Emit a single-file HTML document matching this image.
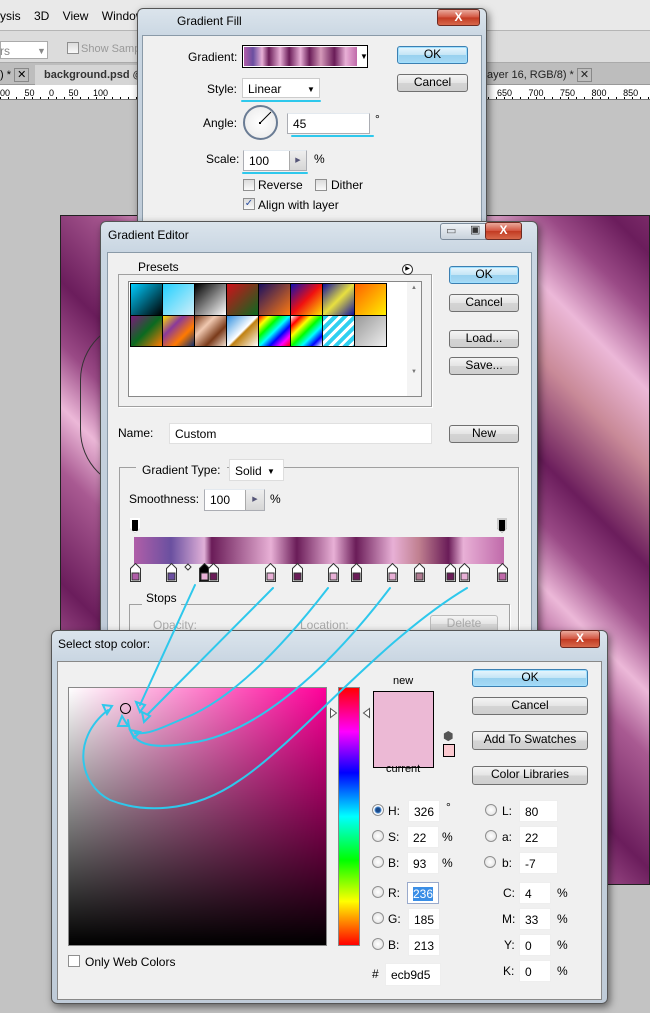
<!DOCTYPE html>
<html><head><meta charset="utf-8"><style>
*{box-sizing:border-box;margin:0;padding:0}
body{width:650px;height:1013px;overflow:hidden;position:relative;background:#c3c3c3;font-family:"Liberation Sans",sans-serif;font-size:12px;color:#000}
.a{position:absolute}
.t{position:absolute;white-space:nowrap;line-height:14px}
.win{position:absolute;background:linear-gradient(180deg,#dbe4ec 0,#c9d6e2 30px,#bfcbd8 100%);border:1px solid #555;border-radius:6px;box-shadow:2px 3px 8px rgba(0,0,0,.5)}
.cl{position:absolute;background:#f0f0f0;border:1px solid #8a9aa8}
.btn{position:absolute;border:1px solid #707070;border-radius:3px;background:linear-gradient(#f4f4f4,#e4e4e4 50%,#d4d4d4 51%,#cfcfcf);text-align:center;font-size:12px;line-height:15px}
.btn.def{border-color:#3c7fb1;background:linear-gradient(#e8f6fd,#c4e5f6 50%,#98d1ef 51%,#a7d9f5);box-shadow:inset 0 0 0 1px #9fe0ff}
.inp{position:absolute;background:#fff;border:1px solid #abadb3;border-top-color:#e3e9ef;font-size:12px;line-height:18px;padding-left:5px}
.x{position:absolute;border:1px solid #6d2a22;border-radius:3px;background:linear-gradient(#e9a99c,#d2533e 50%,#c23a22 51%,#d7684b);color:#fff;font-weight:bold;text-align:center;font-size:12px;line-height:15px}
.cb{position:absolute;width:12px;height:12px;border:1px solid #8f8f8f;background:linear-gradient(#dcdcdc,#fafafa)}
.rad{position:absolute;width:12px;height:12px;border-radius:50%;border:1px solid #8f8f8f;background:radial-gradient(#fff,#ddd)}
.grp{position:absolute;border:1px solid #a0a0a0;box-shadow:1px 1px 0 #fff}
</style></head><body>
<div class="a" style="left:0;top:0;width:650px;height:31px;background:#e9e9e9;border-bottom:1px solid #b5b5b5"></div>
<div class="t" style="left:0;top:9px;font-size:12px">ysis&nbsp;&nbsp;&nbsp;&nbsp;3D&nbsp;&nbsp;&nbsp;&nbsp;View&nbsp;&nbsp;&nbsp;&nbsp;Window</div>
<div class="a" style="left:0;top:31px;width:650px;height:32px;background:#dcdcdc;border-bottom:1px solid #aaa"></div>
<div class="a" style="left:0;top:41px;width:48px;height:18px;background:#fff;border:1px solid #aaa"></div>
<div class="t" style="left:0;top:44px;color:#888">rs</div>
<div class="t" style="left:37px;top:44px;color:#888;font-size:9px">▼</div>
<div class="cb" style="left:67px;top:42px"></div>
<div class="t" style="left:81px;top:42px;color:#999;font-size:11px">Show Sampling Rin</div>
<div class="a" style="left:0;top:63px;width:650px;height:22px;background:#bdbdbd;border-bottom:1px solid #999"></div>
<div class="a" style="left:35px;top:65px;width:102px;height:20px;background:#d5d5d5"></div>
<div class="t" style="left:0;top:68px;font-size:11px">) * <span style="border:1px solid #888;padding:0 2px">✕</span></div>
<div class="t" style="left:44px;top:68px;font-size:11px;font-weight:bold;color:#333">background.psd @ 66.7</div>
<div class="t" style="left:487px;top:68px;font-size:11px;color:#222">ayer 16, RGB/8) * <span style="border:1px solid #888;padding:0 2px">✕</span></div>
<div class="a" style="left:0;top:85px;width:650px;height:15px;background:#fff;border-bottom:1px solid #777;background-image:repeating-linear-gradient(90deg,#000 0 1px,transparent 1px 8px);background-size:100% 3px;background-repeat:no-repeat;background-position:0 12px"></div>
<div class="t" style="left:0;top:86px;font-size:9px;word-spacing:12px">00 50 0 50 100</div>
<div class="t" style="left:497px;top:86px;font-size:9px;word-spacing:14px">650 700 750 800 850</div>
<div class="a" style="left:60px;top:215px;width:590px;height:670px;border:1px solid #222;background:linear-gradient(45deg,#6b1d5c 0%,#a95a92 9%,#ecb8d8 14%,#9a4a86 19%,#6b1d5c 24%,#a95a92 33%,#ecb8d8 38%,#9a4a86 43%,#6b1d5c 48%,#a95a92 57%,#ecb8d8 62%,#9a4a86 67%,#6b1d5c 72%,#c98a98 80%,#ecb8d8 86%,#9a4a86 92%,#6b1d5c 97%,#7a2a68 100%)"></div>
<div class="a" style="left:80px;top:320px;width:60px;height:170px;border:1px solid #333;border-right:none;border-radius:60px 0 0 60px"></div>

<!-- Gradient Fill -->
<div class="win" style="left:137px;top:8px;width:350px;height:230px"></div>
<div class="t" style="left:177px;top:14px;font-size:12px">Gradient Fill</div>
<div class="x" style="left:437px;top:9px;width:43px;height:17px">X</div>
<div class="cl" style="left:142px;top:35px;width:340px;height:200px"></div>
<div class="t" style="left:188px;top:50px">Gradient:</div>
<div class="a" style="left:242px;top:45px;width:126px;height:23px;border:1px solid #000;background:#fff"></div>
<div class="a" style="left:244px;top:47px;width:113px;height:19px;background:linear-gradient(90deg,#b05ea8,#6a4ea0 8%,#e8b0d6 16%,#6a1c58 22%,#e8b0d6 32%,#6a1c58 40%,#e8b0d6 50%,#6a1c58 58%,#d59aba 68%,#6a1c58 80%,#e8b0d6 90%,#c06aaa)"></div>
<div class="t" style="left:360px;top:50px;font-size:8px">▼</div>
<div class="btn def" style="left:397px;top:46px;width:71px;height:18px">OK</div>
<div class="btn" style="left:397px;top:74px;width:71px;height:18px">Cancel</div>
<div class="t" style="left:207px;top:82px">Style:</div>
<div class="a" style="left:242px;top:78px;width:78px;height:20px;background:#fff;border:1px solid #ccc"></div>
<div class="t" style="left:248px;top:82px">Linear</div>
<div class="t" style="left:307px;top:83px;font-size:8px">▼</div>
<div class="t" style="left:203px;top:116px">Angle:</div>
<div class="a" style="left:243px;top:105px;width:35px;height:35px;border-radius:50%;border:2px solid #6a7c94;background:radial-gradient(#fff,#e8e8e8)"></div>
<svg class="a" style="left:243px;top:105px" width="35" height="35"><line x1="17" y1="18" x2="28" y2="7" stroke="#000"/><rect x="16" y="17" width="2" height="2"/></svg>
<div class="inp" style="left:287px;top:113px;width:83px;height:21px;padding-top:1px">45</div>
<div class="t" style="left:375px;top:112px">°</div>
<div class="t" style="left:206px;top:152px">Scale:</div>
<div class="inp" style="left:243px;top:150px;width:64px;height:21px;padding-top:1px">100</div>
<div class="a" style="left:289px;top:151px;width:17px;height:19px;background:linear-gradient(#eee,#d6d6d6);border-left:1px solid #aaa;font-size:7px;color:#557;text-align:center;line-height:19px">▶</div>
<div class="t" style="left:314px;top:152px">%</div>
<div class="cb" style="left:243px;top:179px"></div><div class="t" style="left:258px;top:178px">Reverse</div>
<div class="cb" style="left:315px;top:179px"></div><div class="t" style="left:331px;top:178px">Dither</div>
<div class="cb" style="left:243px;top:198px;font-size:10px;line-height:10px;color:#2a4ea0;text-align:center">✓</div><div class="t" style="left:258px;top:198px">Align with layer</div>

<!-- Gradient Editor -->
<div class="win" style="left:100px;top:221px;width:438px;height:420px"></div>
<div class="t" style="left:108px;top:228px">Gradient Editor</div>
<div class="a" style="left:440px;top:223px;width:82px;height:17px;border:1px solid #7a8a9a;border-radius:3px;background:linear-gradient(#eef2f6,#c8d2dc)"></div>
<div class="t" style="left:446px;top:224px;font-size:11px;color:#555">▭</div>
<div class="t" style="left:470px;top:223px;font-size:11px;color:#333">▣</div>
<div class="x" style="left:485px;top:222px;width:37px;height:18px">X</div>
<div class="cl" style="left:107px;top:252px;width:425px;height:390px"></div>
<div class="grp" style="left:118px;top:274px;width:314px;height:133px"></div>
<div class="t" style="left:134px;top:260px;background:#f0f0f0;padding:0 4px">Presets</div>
<div class="a" style="left:402px;top:264px;width:11px;height:11px;border-radius:50%;border:1px solid #333;font-size:6px;line-height:9px;text-align:center;background:#fff">▶</div>
<div class="a" style="left:128px;top:281px;width:294px;height:116px;background:#fff;border:1px solid #888"></div>
<div class="a" style="left:407px;top:282px;width:14px;height:114px;background:#f4f4f4;font-size:6px;color:#777;text-align:center;line-height:12px">▲<br><br><br><br><br><br><br>▼</div>
<div class="a" style="left:130px;top:283px;width:257px;height:64px;display:grid;grid-template-columns:repeat(8,1fr);gap:1px;background:#000;border:1px solid #000">
<div style="background:linear-gradient(135deg,#00ccff,#000)"></div>
<div style="background:linear-gradient(135deg,#22d0ff,#cfeef8)"></div>
<div style="background:linear-gradient(135deg,#000,#fff)"></div>
<div style="background:linear-gradient(135deg,#d0101a,#0a6a20)"></div>
<div style="background:linear-gradient(135deg,#1a1060,#ff7a10)"></div>
<div style="background:linear-gradient(135deg,#1010b0,#f01010,#ffe000)"></div>
<div style="background:linear-gradient(135deg,#1010a0,#e8e040,#1010a0)"></div>
<div style="background:linear-gradient(135deg,#ff6000,#ffee00)"></div>
<div style="background:linear-gradient(135deg,#7a1a7a,#0a6a20,#ff7a00)"></div>
<div style="background:linear-gradient(135deg,#ffe000,#8a3a9a,#ff7a00,#103070)"></div>
<div style="background:linear-gradient(135deg,#7a3a1a,#f0c8b0,#7a3a1a,#f0e0d0)"></div>
<div style="background:linear-gradient(135deg,#3090e0,#fff 50%,#c08010 55%,#fff)"></div>
<div style="background:linear-gradient(135deg,#f00,#ff0,#0f0,#0ff,#00f,#f0f,#f00)"></div>
<div style="background:linear-gradient(135deg,#fff,#f00,#ff0,#0f0,#0ff,#00f,#fff)"></div>
<div style="background:repeating-linear-gradient(135deg,#30d0f0 0 4px,#fff 4px 7px)"></div>
<div style="background:linear-gradient(135deg,#999,#eee)"></div>
</div>
<div class="btn def" style="left:449px;top:266px;width:70px;height:18px">OK</div>
<div class="btn" style="left:449px;top:294px;width:70px;height:18px">Cancel</div>
<div class="btn" style="left:449px;top:330px;width:70px;height:18px">Load...</div>
<div class="btn" style="left:449px;top:357px;width:70px;height:18px">Save...</div>
<div class="t" style="left:118px;top:426px">Name:</div>
<div class="inp" style="left:169px;top:423px;width:263px;height:21px;border-color:#e0e0e0;padding-top:1px">Custom</div>
<div class="btn" style="left:449px;top:425px;width:70px;height:18px">New</div>
<div class="grp" style="left:119px;top:467px;width:400px;height:180px;border-bottom:none"></div>
<div class="t" style="left:136px;top:463px;background:#f0f0f0;padding:0 6px">Gradient Type:</div>
<div class="a" style="left:229px;top:459px;width:55px;height:22px;background:#fff;border:1px solid #ddd"></div>
<div class="t" style="left:235px;top:464px">Solid</div>
<div class="t" style="left:267px;top:465px;font-size:8px">▼</div>
<div class="t" style="left:129px;top:492px">Smoothness:</div>
<div class="inp" style="left:204px;top:489px;width:61px;height:22px;padding-top:1px">100</div>
<div class="a" style="left:245px;top:490px;width:19px;height:20px;background:linear-gradient(#eee,#d6d6d6);border-left:1px solid #aaa;font-size:7px;color:#557;text-align:center;line-height:20px">▶</div>
<div class="t" style="left:270px;top:492px">%</div>
<div class="a" style="left:130px;top:518px;width:10px;height:15px;background:#000;border:2px solid #fff;outline:1px solid #000;clip-path:polygon(0 0,100% 0,100% 70%,50% 100%,0 70%)"></div>
<div class="a" style="left:497px;top:518px;width:10px;height:15px;background:#000;border:2px solid #ccc;clip-path:polygon(0 0,100% 0,100% 70%,50% 100%,0 70%)"></div>
<div class="a" style="left:134px;top:537px;width:370px;height:27px;background:linear-gradient(90deg,#b05ea8,#6a50a0 10%,#e0b0d8 19%,#6a1c58 21%,#e8b0d6 37%,#6a1c58 44%,#e8b0d6 54%,#6a1c58 60%,#e8b0d6 70%,#c08090 77%,#6a1c58 85%,#e8b0d6 89%,#c06aaa)"></div>
<svg class="a" style="left:125px;top:563px" width="390" height="22">
<g stroke="#333" stroke-width="1">
<path d="M5.5 10.5V5.5L10.5 .5L15.5 5.5V18.5H5.5Z" fill="#fff"/><rect x="7" y="10" width="7" height="7" fill="#b05ea8"/>
<path d="M41.5 10.5V5.5L46.5 .5L51.5 5.5V18.5H41.5Z" fill="#fff"/><rect x="43" y="10" width="7" height="7" fill="#6a4ea0"/>
<path d="M74.5 10.5V5.5L79.5 .5L84.5 5.5V18.5H74.5Z" fill="#000"/><rect x="76" y="10" width="7" height="7" fill="#e8b0d6"/>
<path d="M83.5 10.5V5.5L88.5 .5L93.5 5.5V18.5H83.5Z" fill="#fff"/><rect x="85" y="10" width="7" height="7" fill="#6a1c58"/>
<path d="M140.5 10.5V5.5L145.5 .5L150.5 5.5V18.5H140.5Z" fill="#fff"/><rect x="142" y="10" width="7" height="7" fill="#e8b0d6"/>
<path d="M167.5 10.5V5.5L172.5 .5L177.5 5.5V18.5H167.5Z" fill="#fff"/><rect x="169" y="10" width="7" height="7" fill="#6a1c58"/>
<path d="M203.5 10.5V5.5L208.5 .5L213.5 5.5V18.5H203.5Z" fill="#fff"/><rect x="205" y="10" width="7" height="7" fill="#e8b0d6"/>
<path d="M226.5 10.5V5.5L231.5 .5L236.5 5.5V18.5H226.5Z" fill="#fff"/><rect x="228" y="10" width="7" height="7" fill="#6a1c58"/>
<path d="M262.5 10.5V5.5L267.5 .5L272.5 5.5V18.5H262.5Z" fill="#fff"/><rect x="264" y="10" width="7" height="7" fill="#e8b0d6"/>
<path d="M289.5 10.5V5.5L294.5 .5L299.5 5.5V18.5H289.5Z" fill="#fff"/><rect x="291" y="10" width="7" height="7" fill="#b07a90"/>
<path d="M320.5 10.5V5.5L325.5 .5L330.5 5.5V18.5H320.5Z" fill="#fff"/><rect x="322" y="10" width="7" height="7" fill="#6a1c58"/>
<path d="M334.5 10.5V5.5L339.5 .5L344.5 5.5V18.5H334.5Z" fill="#fff"/><rect x="336" y="10" width="7" height="7" fill="#e8b0d6"/>
<path d="M372.5 10.5V5.5L377.5 .5L382.5 5.5V18.5H372.5Z" fill="#fff"/><rect x="374" y="10" width="7" height="7" fill="#c06aaa"/>
<path d="M63 1L66 4L63 7L60 4Z" fill="#fff"/>
</g></svg>
<div class="grp" style="left:129px;top:604px;width:381px;height:40px;border-bottom:none"></div>
<div class="t" style="left:142px;top:591px;background:#f0f0f0;padding:0 4px">Stops</div>
<div class="t" style="left:153px;top:618px;color:#aaa">Opacity:</div>
<div class="t" style="left:300px;top:618px;color:#aaa">Location:</div>
<div class="btn" style="left:430px;top:615px;width:68px;height:18px;color:#aaa;border-color:#bbb">Delete</div>

<!-- Select stop color -->
<div class="win" style="left:51px;top:630px;width:557px;height:374px"></div>
<div class="t" style="left:58px;top:637px">Select stop color:</div>
<div class="x" style="left:560px;top:630px;width:40px;height:18px">X</div>
<div class="cl" style="left:57px;top:661px;width:545px;height:339px;border-color:#888"></div>
<div class="a" style="left:68px;top:687px;width:259px;height:259px;border:1px solid #888;background:linear-gradient(to bottom,transparent,#000),linear-gradient(to right,#fff,#ff0099)"></div>
<div class="a" style="left:120px;top:703px;width:11px;height:11px;border-radius:50%;border:1px solid #000"></div>
<div class="a" style="left:338px;top:687px;width:22px;height:259px;border:1px solid #888;background:linear-gradient(#f00,#f0f 17%,#00f 33%,#0ff 50%,#0f0 67%,#ff0 83%,#f00)"></div>
<svg class="a" style="left:330px;top:707px" width="40" height="12"><path d="M.5 1.5L6.5 6L.5 10.5Z M39.5 1.5L33.5 6L39.5 10.5Z" fill="#fff" stroke="#555"/></svg>
<div class="t" style="left:393px;top:674px;font-size:11px">new</div>
<div class="a" style="left:373px;top:691px;width:61px;height:77px;border:1px solid #000;background:#ecb9d5"></div>
<div class="t" style="left:386px;top:762px;font-size:11px">current</div>
<div class="t" style="left:443px;top:729px;font-size:12px;color:#555">⬢</div>
<div class="a" style="left:443px;top:744px;width:12px;height:13px;border:1px solid #000;background:#fbc9d0"></div>
<div class="btn def" style="left:472px;top:669px;width:116px;height:18px">OK</div>
<div class="btn" style="left:472px;top:697px;width:116px;height:18px">Cancel</div>
<div class="btn" style="left:472px;top:731px;width:116px;height:19px">Add To Swatches</div>
<div class="btn" style="left:472px;top:766px;width:116px;height:19px">Color Libraries</div>
<div class="rad" style="left:372px;top:804px;background:radial-gradient(#1a4a8a 2px,#4a8ad0 3px,#fff 4px)"></div><div class="t" style="left:388px;top:804px">H:</div><div class="inp" style="left:408px;top:800px;width:32px;height:22px;border-color:#eee;padding-top:2px">326</div><div class="t" style="left:446px;top:800px">°</div>
<div class="rad" style="left:372px;top:830px"></div><div class="t" style="left:388px;top:830px">S:</div><div class="inp" style="left:407px;top:826px;width:32px;height:22px;border-color:#eee;padding-top:2px">22</div><div class="t" style="left:442px;top:830px">%</div>
<div class="rad" style="left:372px;top:856px"></div><div class="t" style="left:388px;top:856px">B:</div><div class="inp" style="left:407px;top:852px;width:32px;height:22px;border-color:#eee;padding-top:2px">93</div><div class="t" style="left:442px;top:856px">%</div>
<div class="rad" style="left:372px;top:886px"></div><div class="t" style="left:388px;top:886px">R:</div><div class="inp" style="left:407px;top:882px;width:32px;height:22px;border-color:#9ac;padding-top:2px"><span style="background:#3a8ee6;color:#fff">236</span></div>
<div class="rad" style="left:372px;top:912px"></div><div class="t" style="left:388px;top:912px">G:</div><div class="inp" style="left:408px;top:908px;width:32px;height:22px;border-color:#eee;padding-top:2px">185</div>
<div class="rad" style="left:372px;top:938px"></div><div class="t" style="left:388px;top:938px">B:</div><div class="inp" style="left:408px;top:934px;width:32px;height:22px;border-color:#eee;padding-top:2px">213</div>
<div class="rad" style="left:485px;top:804px"></div><div class="t" style="left:502px;top:804px">L:</div><div class="inp" style="left:519px;top:800px;width:39px;height:22px;border-color:#eee;padding-top:2px">80</div>
<div class="rad" style="left:485px;top:830px"></div><div class="t" style="left:502px;top:830px">a:</div><div class="inp" style="left:519px;top:826px;width:39px;height:22px;border-color:#eee;padding-top:2px">22</div>
<div class="rad" style="left:484px;top:856px"></div><div class="t" style="left:502px;top:856px">b:</div><div class="inp" style="left:519px;top:852px;width:39px;height:22px;border-color:#eee;padding-top:2px">-7</div>
<div class="t" style="left:503px;top:886px">C:</div><div class="inp" style="left:519px;top:882px;width:32px;height:22px;border-color:#eee;padding-top:2px">4</div><div class="t" style="left:557px;top:886px">%</div>
<div class="t" style="left:502px;top:912px">M:</div><div class="inp" style="left:519px;top:908px;width:32px;height:22px;border-color:#eee;padding-top:2px">33</div><div class="t" style="left:557px;top:912px">%</div>
<div class="t" style="left:504px;top:938px">Y:</div><div class="inp" style="left:519px;top:934px;width:32px;height:22px;border-color:#eee;padding-top:2px">0</div><div class="t" style="left:557px;top:938px">%</div>
<div class="t" style="left:503px;top:964px">K:</div><div class="inp" style="left:519px;top:960px;width:32px;height:22px;border-color:#eee;padding-top:2px">0</div><div class="t" style="left:557px;top:964px">%</div>
<div class="t" style="left:372px;top:967px">#</div><div class="inp" style="left:385px;top:963px;width:56px;height:23px;border-color:#eee;padding-top:2px">ecb9d5</div>
<div class="cb" style="left:68px;top:955px;background:#fff"></div><div class="t" style="left:85px;top:955px">Only Web Colors</div>

<svg class="a" style="left:0;top:0" width="650" height="1013">
<g stroke="#2ec8ec" stroke-width="2" fill="none" stroke-linecap="round">
<path d="M242 101H320M292 136H373M243 173H307"/>
<path d="M195 585L140 705"/>
<path d="M273 588L148 714"/>
<path d="M328 588C280 650 230 700 185 718C165 726 150 735 135 733"/>
<path d="M390 588C320 680 250 735 190 743C150 750 130 745 128 720"/>
<path d="M467 588C380 640 300 740 240 780C190 815 140 812 110 800C80 785 70 740 108 710"/>
<path d="M136 702L145 705L140 712Z M142 712L150 716L144 722Z M130 730L140 732L134 738Z M122 716L128 726L118 726Z M103 705L112 706L107 714Z"/>
</g></svg>
</body></html>
